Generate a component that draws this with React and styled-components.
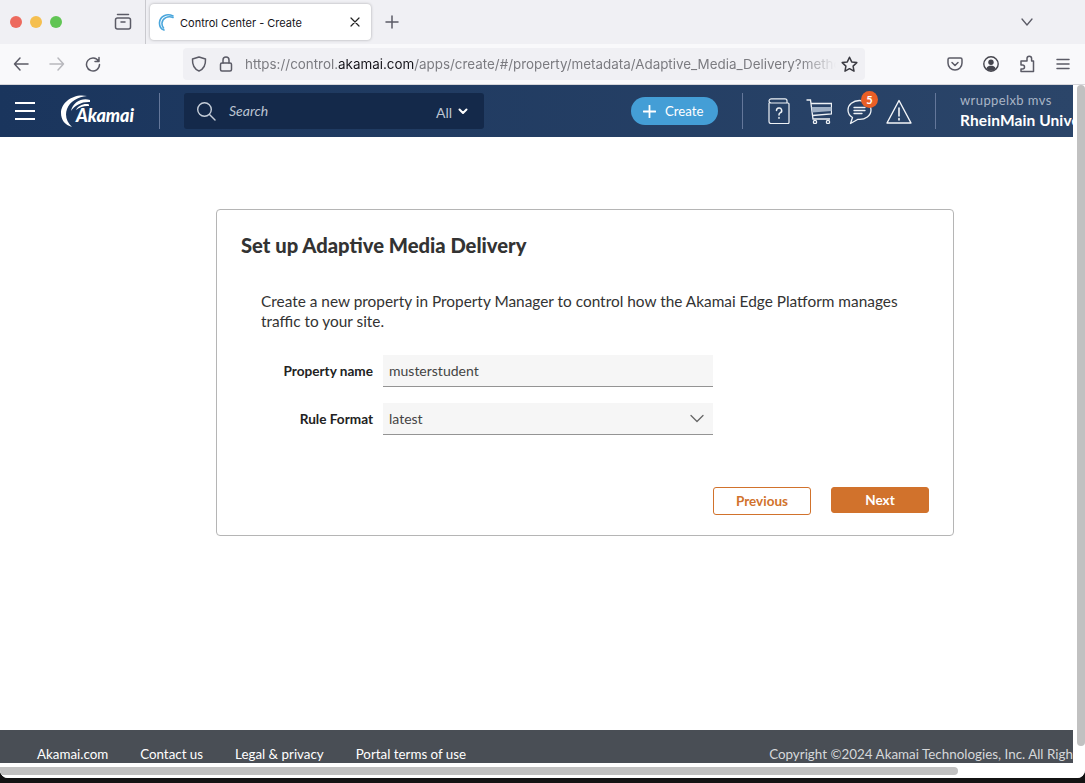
import styled, { createGlobalStyle } from "styled-components";

const Global = createGlobalStyle`
  html, body { margin: 0; padding: 0; background: #111; overflow: hidden; }
  * { box-sizing: border-box; }
`;

const uiFont = `"Lato", "Noto Sans", sans-serif`;
const chromeFont = `"Inter", "Liberation Sans", sans-serif`;

const Screen = styled.div`
  width: 1085px;
  height: 783px;
  overflow: hidden;
  position: relative;
  background: #131313;
  font-family: ${uiFont};
`;

const Window = styled.div`
  height: 778px;
  background: #fff;
  border-radius: 0 0 8px 8px;
  display: flex;
  flex-direction: column;
  overflow: hidden;
`;

const BehindText = styled.div`
  font-size: 15px;
  line-height: 15px;
  color: #3e3e3e;
  margin-left: -6px;
`;

/* browser chrome */
const TabStrip = styled.div`
  height: 44px;
  flex: none;
  background: #f0f0f4;
  display: flex;
  align-items: flex-start;
`;

const Lights = styled.div`
  display: flex;
  gap: 8px;
  padding: 16px 0 0 10px;
  width: 111px;
`;

const Light = styled.span`
  width: 12px;
  height: 12px;
  border-radius: 50%;
  background: ${(p) => p.$color};
`;

const StripSlot = styled.div`
  width: ${(p) => p.$w || 24}px;
  height: 44px;
  display: flex;
  align-items: center;
  justify-content: center;
  margin-left: ${(p) => p.$ml || 0}px;
  flex: none;
`;

const TabDivider = styled.div`
  width: 1px;
  height: 44px;
  background: #c9c9ce;
  margin-left: 10px;
`;

const Tab = styled.div`
  width: 221px;
  height: 36px;
  margin: 4px 0 0 4px;
  background: #fff;
  border-radius: 4px;
  box-shadow: 0 0 3px rgba(0, 0, 0, 0.3);
  display: flex;
  align-items: center;
  padding: 0 10px 0 8px;
  font: 400 11px ${chromeFont};
  color: #15141a;
`;

const TabTitle = styled.span`
  margin-left: 6px;
  padding-top: 2px;
  flex: 1;
`;

const Toolbar = styled.div`
  height: 40px;
  flex: none;
  background: #f9f9fb;
  border-bottom: 1px solid #d6d6da;
  box-sizing: content-box;
  display: flex;
  align-items: center;
  padding-left: 3px;
`;

const ToolSlot = styled.div`
  width: 36px;
  height: 36px;
  flex: none;
  display: flex;
  align-items: center;
  justify-content: center;
`;

const UrlBar = styled.div`
  width: 682px;
  height: 32px;
  margin: 0 72px;
  background: #f0f0f4;
  border-radius: 4px;
  display: flex;
  align-items: center;
  padding-left: 8px;
  flex: none;
`;

const UrlSpacer = styled.div`
  width: ${(p) => p.$w}px;
  flex: none;
  display: flex;
  justify-content: center;
`;

const UrlText = styled.div`
  width: 591px;
  flex: none;
  overflow: hidden;
  white-space: nowrap;
  font: 400 13.4px ${chromeFont};
  color: #7b7b80;
  -webkit-mask-image: linear-gradient(90deg, #000 94%, transparent);
  mask-image: linear-gradient(90deg, #000 94%, transparent);
  b {
    font-weight: 400;
    color: #15141a;
  }
`;

/* viewport with the scrollbars */
const Viewport = styled.div`
  flex: 1;
  min-height: 0;
  display: flex;
`;

const Page = styled.div`
  width: 1073px;
  flex: none;
  display: flex;
  flex-direction: column;
`;

const VTrack = styled.div`
  flex: 1;
  background: #fff;
  padding-left: 4px;
`;

const VThumb = styled.div`
  width: 8px;
  height: 661px;
  background: #c1c1c1;
  border-radius: 4px;
`;

const HTrack = styled.div`
  height: 15px;
  flex: none;
  padding-top: 4px;
  background: #fff;
`;

const HThumb = styled.div`
  width: 958px;
  height: 8px;
  background: #c1c1c1;
  border-radius: 0 4px 4px 0;
`;

/* portal header */
const Nav = styled.header`
  height: 52px;
  flex: none;
  background: linear-gradient(90deg, #1a355d, #2b4569);
  display: flex;
  align-items: center;
  overflow: hidden;
`;

const Burger = styled.div`
  width: 20px;
  margin-left: 15px;
  display: flex;
  flex-direction: column;
  gap: 6px;
  flex: none;
  span {
    height: 2px;
    background: #fff;
  }
`;

const Logo = styled.div`
  position: relative;
  width: 74px;
  height: 34px;
  margin-left: 26px;
  flex: none;
`;

const LogoWord = styled.span`
  position: absolute;
  left: 15px;
  top: 10px;
  font: italic 900 18px/22px ${uiFont};
  color: #fff;
  letter-spacing: -0.1px;
`;

const NavDivider = styled.div`
  width: 1px;
  height: 36px;
  background: #64779a;
  flex: none;
  margin-left: ${(p) => p.$ml}px;
`;

const Search = styled.div`
  width: 300px;
  height: 36px;
  margin-left: 24px;
  flex: none;
  background: #14294a;
  border-radius: 3px;
  display: flex;
  align-items: center;
  padding: 0 16px 0 12px;
  color: #bcc5d2;
`;

const SearchLabel = styled.span`
  margin: 0 0 2px 13px;
  flex: 1;
  font-size: 14px;
  font-style: italic;
`;

const SearchScope = styled.span`
  font-size: 14px;
  margin: 2px 6px 0 0;
`;

const CreateButton = styled.div`
  width: 87px;
  height: 28px;
  margin-left: 147px;
  flex: none;
  background: #449ed6;
  border-radius: 14px;
  display: flex;
  align-items: center;
  gap: 9px;
  padding-left: 12px;
  color: #fff;
  font-size: 13.2px;
`;

const NavIcon = styled.div`
  position: relative;
  flex: none;
  display: flex;
  margin-left: ${(p) => p.$ml}px;
  margin-top: ${(p) => p.$mt || 0}px;
`;

const Badge = styled.span`
  position: absolute;
  top: -8px;
  right: -6px;
  width: 17px;
  height: 17px;
  border-radius: 50%;
  background: #ea5f26;
  color: #fff;
  font-size: 11px;
  font-weight: 700;
  display: flex;
  align-items: center;
  justify-content: center;
`;

const User = styled.div`
  margin-left: 24px;
  flex: none;
  white-space: nowrap;
  display: flex;
  flex-direction: column;
  gap: 1px;
  margin-top: -1px;
`;

const UserName = styled.div`
  font-size: 13px;
  line-height: 18px;
  color: #a9b5c6;
  letter-spacing: 0.4px;
`;

const UserOrg = styled.div`
  font-size: 15.5px;
  line-height: 20px;
  font-weight: 700;
  color: #fff;
  letter-spacing: 0.1px;
`;

/* card */
const Main = styled.main`
  flex: 1;
  padding: 72px 0 0 216px;
  background: #fff;
`;

const Card = styled.section`
  width: 738px;
  height: 327px;
  border: 1px solid #b5b5b5;
  border-radius: 4px;
  padding: 21px 24px 0;
  color: #333;
`;

const Title = styled.h1`
  margin: 0;
  font-size: 20.2px;
  line-height: 28px;
  font-weight: 900;
  color: #333;
`;

const Lead = styled.p`
  margin: 32px 0 0 20px;
  font-size: 15.4px;
  line-height: 20px;
  width: 670px;
  color: #333;
`;

const Row = styled.div`
  display: flex;
  align-items: center;
  margin-top: ${(p) => p.$mt}px;
`;

const Label = styled.label`
  width: 132px;
  text-align: right;
  font-size: 13.6px;
  font-weight: 700;
  color: #222;
  flex: none;
`;

const Field = styled.div`
  width: 330px;
  height: 32px;
  margin-left: 10px;
  background: #f6f6f6;
  border-bottom: 1px solid #949494;
  display: flex;
  align-items: center;
  justify-content: space-between;
  padding: 0 9px 0 6px;
  font-size: 14px;
  color: #444;
`;

const Actions = styled.div`
  display: flex;
  align-items: flex-start;
  justify-content: flex-end;
  gap: 20px;
  margin-top: 52px;
`;

const Button = styled.button`
  width: 98px;
  height: ${(p) => (p.$primary ? 26 : 28)}px;
  border: 1px solid #d1722c;
  border-radius: 3px;
  background: ${(p) => (p.$primary ? "#d1722c" : "#fff")};
  color: ${(p) => (p.$primary ? "#fff" : "#d1722c")};
  font: 700 13.5px ${uiFont};
  padding: 0;
`;

/* footer */
const Footer = styled.footer`
  height: 33px;
  flex: none;
  background: #494e55;
  display: flex;
  align-items: flex-end;
  overflow: hidden;
  white-space: nowrap;
  color: #fff;
  font-size: 13.35px;
  line-height: 18px;
  padding: 0 0 0 37px;
  > * {
    flex: none;
  }
`;

const FootLink = styled.a`
  margin-left: ${(p) => p.$ml || 0}px;
`;

const Copyright = styled.span`
  margin-left: 303px;
  color: #d6d8da;
  font-size: 13.4px;
`;

const ChromeIcon = styled.svg`
  fill: none;
  stroke: ${(p) => p.$stroke || "#5b5b66"};
  stroke-width: ${(p) => p.$sw || 1.5};
  stroke-linecap: round;
  stroke-linejoin: round;
  flex: none;
  display: block;
`;

const Favicon = () => (
  <ChromeIcon width="16" height="18" viewBox="0 0 16 18" $stroke="#4aa6dc" $sw={1.6}>
    <path d="M15 3C9 0 2 3 1.5 9.500C1.300 13 3 16 6 17" />
    <path d="M15 4.500C10 2.500 4.500 5 4 10C3.800 12 4.400 13.500 5.500 15" />
  </ChromeIcon>
);

const Swoosh = () => (
  <svg width="30" height="34" viewBox="0 0 30 34" style={{ display: "block" }}>
    <path
      fill="#fff"
      d="M26 2C13 -1 0 8 0 19C0 26 4 31 11 33C6 28 3.500 22 6 15C9 7 17 3 26 2Z"
    />
    <path fill="#fff" d="M29 6C21 3.500 12 8 10 17C14 11 21 7.500 29 8Z" />
    <path fill="#fff" d="M28 10.500C23 9 17 12 15 16C19 13 23 11.500 28 12Z" />
  </svg>
);

export default function App() {
  return (
    <Screen>
      <Global />
      <Window>
        <TabStrip>
          <Lights>
            <Light $color="#ed6a5e" />
            <Light $color="#f5bf4f" />
            <Light $color="#61c554" />
          </Lights>
          <StripSlot>
            <ChromeIcon width="18" height="18" viewBox="0 0 18 18">
              <path d="M3.500 1.500h11" />
              <rect x="1.500" y="5" width="15" height="11" rx="2" />
              <path d="M7 9h4" />
            </ChromeIcon>
          </StripSlot>
          <TabDivider />
          <Tab>
            <Favicon />
            <TabTitle>Control Center - Create</TabTitle>
            <ChromeIcon width="12" height="12" viewBox="0 0 12 12" $stroke="#222" $sw={1.2}>
              <path d="M2 2l8 8M10 2l-8 8" />
            </ChromeIcon>
          </Tab>
          <StripSlot $ml={9}>
            <ChromeIcon width="14" height="14" viewBox="0 0 14 14">
              <path d="M7 1v12M1 7h12" />
            </ChromeIcon>
          </StripSlot>
          <StripSlot $ml={611}>
            <ChromeIcon width="14" height="10" viewBox="0 0 14 10" $sw={1.3}>
              <path d="M2 2l5 6 5-6" />
            </ChromeIcon>
          </StripSlot>
        </TabStrip>

        <Toolbar>
          <ToolSlot>
            <ChromeIcon width="16" height="16" viewBox="0 0 16 16">
              <path d="M15 8H1.500M7 2L1.500 8 7 14" />
            </ChromeIcon>
          </ToolSlot>
          <ToolSlot>
            <ChromeIcon width="16" height="16" viewBox="0 0 16 16" $stroke="#b8b8bd">
              <path d="M1 8h13.500M9 2l5.500 6L9 14" />
            </ChromeIcon>
          </ToolSlot>
          <ToolSlot>
            <ChromeIcon width="16" height="16" viewBox="0 0 16 16">
              <path d="M13.500 5A6.500 6.500 0 1 0 14.500 8.500M14 1.500V5.500H10" />
            </ChromeIcon>
          </ToolSlot>
          <UrlBar>
            <UrlSpacer $w={16}>
              <ChromeIcon width="16" height="16" viewBox="0 0 16 16">
                <path d="M8 1l6.500 2c.3 6-1.500 10-6.500 12C3 13 1.200 9 1.500 3z" />
              </ChromeIcon>
            </UrlSpacer>
            <UrlSpacer $w={38}>
              <ChromeIcon width="14" height="16" viewBox="0 0 14 16">
                <rect x="1.500" y="7" width="11" height="8" rx="1.500" />
                <path d="M4 7V4a3 3 0 0 1 6 0v3" />
              </ChromeIcon>
            </UrlSpacer>
            <UrlText>
              https://control.<b>akamai.com</b>
              /apps/create/#/property/metadata/Adaptive_Media_Delivery?method=create
            </UrlText>
            <UrlSpacer $w={26}>
              <ChromeIcon width="17" height="17" viewBox="0 0 17 17" $stroke="#3a3a42">
                <path d="M8.500 1.200l2.200 4.700 5.100.7-3.700 3.500.9 5.100-4.500-2.500-4.500 2.500.9-5.100L1.200 6.600l5.100-.7z" />
              </ChromeIcon>
            </UrlSpacer>
          </UrlBar>
          <ToolSlot>
            <ChromeIcon width="16" height="16" viewBox="0 0 16 16">
              <path d="M2.500 2h11A1.500 1.500 0 0 1 15 3.500V7A7 7 0 0 1 1 7V3.500A1.500 1.500 0 0 1 2.500 2z" />
              <path d="M5 6.500l3 3 3-3" />
            </ChromeIcon>
          </ToolSlot>
          <ToolSlot>
            <svg width="16" height="16" viewBox="0 0 16 16" style={{ display: "block" }}>
              <circle cx="8" cy="8" r="7.200" fill="none" stroke="#45454d" strokeWidth="1.400" />
              <circle cx="8" cy="6.300" r="2.700" fill="#45454d" />
              <path d="M3.200 12.500C4.500 10 6 9.800 8 9.800s3.500.2 4.800 2.700C11.500 14 10 14.800 8 14.800s-3.500-.8-4.800-2.300z" fill="#45454d" />
            </svg>
          </ToolSlot>
          <ToolSlot>
            <ChromeIcon width="16" height="18" viewBox="0 0 16 18">
              <path d="M2 6h6V3.500a2.300 2.300 0 0 1 4.600 0V6H14.500v10.500H2V14h1.500a2 2 0 0 0 0-4H2z" />
            </ChromeIcon>
          </ToolSlot>
          <ToolSlot>
            <ChromeIcon width="14" height="12" viewBox="0 0 14 12">
              <path d="M1 1.500h12M1 6h12M1 10.500h12" />
            </ChromeIcon>
          </ToolSlot>
        </Toolbar>

        <Viewport>
          <Page>
            <Nav>
              <Burger>
                <span />
                <span />
                <span />
              </Burger>
              <Logo>
                <Swoosh />
                <LogoWord>Akamai</LogoWord>
              </Logo>
              <NavDivider $ml={24} />
              <Search>
                <ChromeIcon width="20" height="20" viewBox="0 0 20 20" $stroke="#c6ced9" $sw={1.4}>
                  <circle cx="8.500" cy="8.500" r="6.800" />
                  <path d="M13.500 13.500L19 19" />
                </ChromeIcon>
                <SearchLabel>Search</SearchLabel>
                <SearchScope>All</SearchScope>
                <ChromeIcon width="10" height="7" viewBox="0 0 10 7" $stroke="#fff" $sw={2}>
                  <path d="M1.500 1.500L5 5l3.500-3.500" />
                </ChromeIcon>
              </Search>
              <CreateButton>
                <ChromeIcon width="13" height="13" viewBox="0 0 13 13" $stroke="#fff" $sw={1.8}>
                  <path d="M6.500 0.500v12M.5 6.500h12" />
                </ChromeIcon>
                Create
              </CreateButton>
              <NavDivider $ml={24} />
              <NavIcon $ml={25}>
                <ChromeIcon width="22" height="26" viewBox="0 0 22 26" $stroke="#eef2f6" $sw={1.2}>
                  <path d="M1 5v18.500a2 2 0 0 0 2 2h17a1 1 0 0 0 1-1V6a1 1 0 0 0-1-1H3.500A2.200 2.200 0 0 1 1 3a2.300 2.300 0 0 1 2.500-2.200H17a2 2 0 0 1 2 2V5" />
                  <path d="M8.500 12.500a2.600 2.600 0 1 1 3.600 2.400c-.8.400-1.100 1-1.100 2.100M11 19.500v.8" strokeWidth="1.500" />
                </ChromeIcon>
              </NavIcon>
              <NavIcon $ml={16}>
                <svg width="26" height="25" viewBox="0 0 26 25" style={{ display: "block" }} fill="none" stroke="#eef2f6" strokeWidth="1.300">
                  <path d="M.5 1h4l2.500 19H24" />
                  <path d="M5 4.500h20.500V15L6.500 16.500" />
                  <path d="M5.700 8h19.800v4L6.200 13.500z" fill="#9fb0c5" stroke="none" />
                  <circle cx="9" cy="23" r="1.600" />
                  <circle cx="22" cy="23" r="1.600" />
                </svg>
              </NavIcon>
              <NavIcon $ml={15} $mt={2}>
                <ChromeIcon width="25" height="26" viewBox="0 0 25 26" $stroke="#eef2f6" $sw={1.300}>
                  <path d="M12.500 1.500C6 1.500 1 5.500 1 11c0 3.500 2 6 4.500 7.500L3.500 24.500 11 20.300C18.500 21 24 16.500 24 11 24 5.500 19 1.500 12.500 1.500z" />
                  <path d="M7 8.500h11M7 11.500h11M7 14.500h8" />
                </ChromeIcon>
                <Badge>5</Badge>
              </NavIcon>
              <NavIcon $ml={14}>
                <ChromeIcon width="26" height="25" viewBox="0 0 26 25" $stroke="#f4f6f9" $sw={1.400}>
                  <path d="M13 1.500L25 24H1z" />
                  <path d="M13 9v8M13 19.500v1.500" strokeWidth="1.600" />
                </ChromeIcon>
              </NavIcon>
              <NavDivider $ml={23} />
              <User>
                <UserName>wruppelxb mvs</UserName>
                <UserOrg>RheinMain University</UserOrg>
              </User>
            </Nav>

            <Main>
              <Card>
                <Title>Set up Adaptive Media Delivery</Title>
                <Lead>
                  Create a new property in Property Manager to control how the Akamai Edge
                  Platform manages traffic to your site.
                </Lead>
                <Row $mt={24}>
                  <Label>Property name</Label>
                  <Field>musterstudent</Field>
                </Row>
                <Row $mt={16}>
                  <Label>Rule Format</Label>
                  <Field>
                    latest
                    <ChromeIcon width="14" height="9" viewBox="0 0 14 9" $stroke="#666" $sw={1.3}>
                      <path d="M1 1.500l6 6 6-6" />
                    </ChromeIcon>
                  </Field>
                </Row>
                <Actions>
                  <Button>Previous</Button>
                  <Button $primary>Next</Button>
                </Actions>
              </Card>
            </Main>

            <Footer>
              <FootLink>Akamai.com</FootLink>
              <FootLink $ml={32}>Contact us</FootLink>
              <FootLink $ml={32}>Legal &amp; privacy</FootLink>
              <FootLink $ml={32}>Portal terms of use</FootLink>
              <Copyright>Copyright ©2024 Akamai Technologies, Inc. All Rights Reserved</Copyright>
            </Footer>
            <HTrack>
              <HThumb />
            </HTrack>
          </Page>
          <VTrack>
            <VThumb />
          </VTrack>
        </Viewport>
      </Window>
      <BehindText>sponse</BehindText>
    </Screen>
  );
}
